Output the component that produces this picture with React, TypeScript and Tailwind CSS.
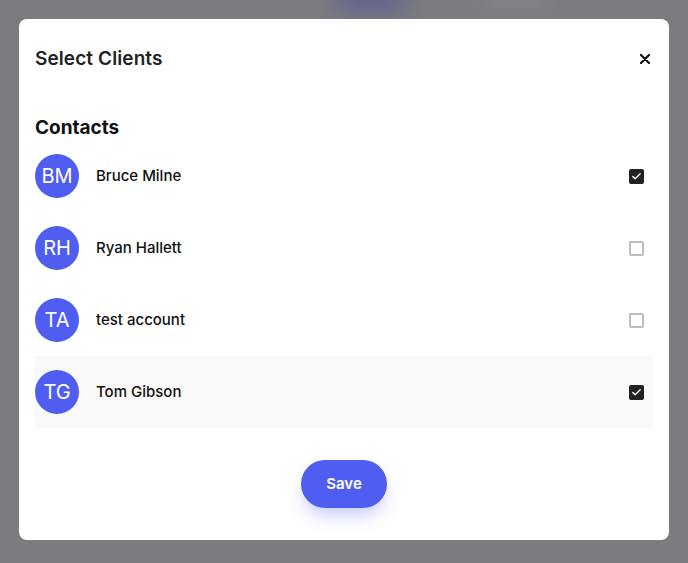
import { Check } from "lucide-react";

const contacts = [
  { initials: "BM", name: "Bruce Milne", checked: true },
  { initials: "RH", name: "Ryan Hallett", checked: false },
  { initials: "TA", name: "test account", checked: false },
  { initials: "TG", name: "Tom Gibson", checked: true, hover: true },
];

function Checkbox({ checked }: { checked: boolean }) {
  if (checked) {
    return (
      <span className="flex h-[15px] w-[15px] items-center justify-center rounded-[2px] bg-[#222222]">
        <Check size={11} strokeWidth={3} className="text-white" />
      </span>
    );
  }
  return <span className="h-[15px] w-[15px] rounded-[2px] border-2 border-[#bdbdbd] bg-white" />;
}

export default function App() {
  return (
    <div
      className="relative h-[563px] w-[688px] overflow-hidden bg-[#7b7c80]"
      style={{ fontFamily: "Inter, 'Noto Sans', sans-serif" }}
    >
      <div className="absolute left-[335px] top-[-22px] h-[34px] w-[72px] rounded-full bg-[#5f6290] blur-[12px]" />
      <div className="absolute left-[480px] top-[-18px] h-[28px] w-[70px] rounded-full bg-[#838487] blur-[12px]" />

      <div className="absolute left-[19px] top-[19px] flex h-[521px] w-[650px] flex-col rounded-[8px] bg-white px-4 pt-[26px] pb-8">
        <div className="flex h-7 items-center justify-between">
          <h2 className="text-[19px] font-semibold tracking-[0.1px] text-[#222222]">Select Clients</h2>
          <svg width="10" height="10" viewBox="0 0 10 10" className="mr-[3px]">
            <path d="M1 1L9 9M9 1L1 9" stroke="#111" strokeWidth="2.2" strokeLinecap="round" />
          </svg>
        </div>

        <h3 className="mt-[41px] h-7 text-[19px] leading-7 font-bold text-[#111111]">Contacts</h3>

        <div className="-mt-[2px] flex flex-col">
          {contacts.map((c) => (
            <div
              key={c.name}
              className={`flex h-[72px] items-center pr-[9px] ${c.hover ? "bg-[#f9f9f9]" : ""}`}
            >
              <div className="flex h-11 w-11 items-center justify-center rounded-full bg-[#4f5ef0] text-[20px] text-white">
                {c.initials}
              </div>
              <span className="ml-[17px] flex-1 text-[15px] font-medium text-[#111111]">{c.name}</span>
              <Checkbox checked={c.checked} />
            </div>
          ))}
        </div>

        <div className="mt-8 flex justify-center">
          <button
            type="button"
            className="h-12 w-[86px] rounded-full bg-[#4f5ef0] text-[15px] font-semibold text-white shadow-[0_10px_18px_-4px_rgba(79,94,240,0.35)]"
          >
            Save
          </button>
        </div>
      </div>
    </div>
  );
}
